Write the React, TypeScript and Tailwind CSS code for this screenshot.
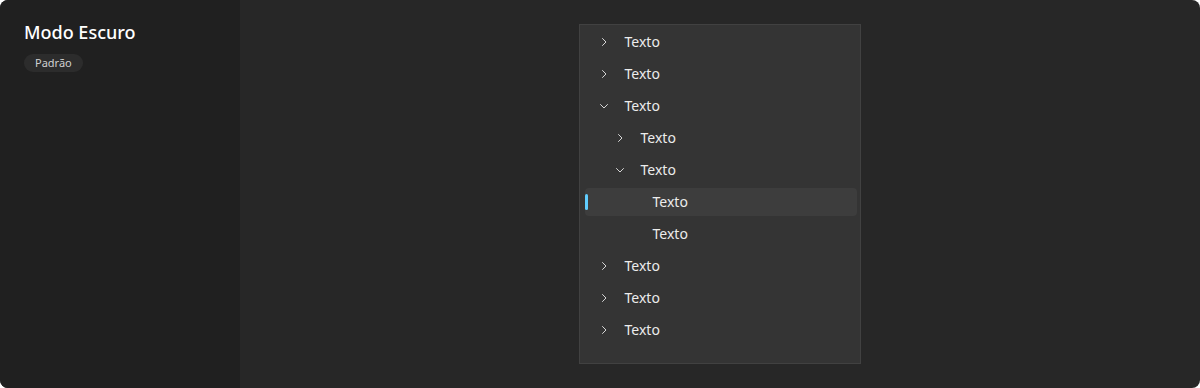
import React from "react";

type Node = {
  label: string;
  level: number;
  kind: "closed" | "open" | "leaf";
  selected?: boolean;
};

const nodes: Node[] = [
  { label: "Texto", level: 0, kind: "closed" },
  { label: "Texto", level: 0, kind: "closed" },
  { label: "Texto", level: 0, kind: "open" },
  { label: "Texto", level: 1, kind: "closed" },
  { label: "Texto", level: 1, kind: "open" },
  { label: "Texto", level: 2, kind: "leaf", selected: true },
  { label: "Texto", level: 2, kind: "leaf" },
  { label: "Texto", level: 0, kind: "closed" },
  { label: "Texto", level: 0, kind: "closed" },
  { label: "Texto", level: 0, kind: "closed" },
];

function Chevron({ open }: { open: boolean }) {
  return (
    <svg width="12" height="12" viewBox="0 0 12 12" fill="none" className="text-[#d6d6d6]">
      {open ? (
        <path d="M2.5 4.5 6 8l3.5-3.5" stroke="currentColor" strokeWidth="1" strokeLinecap="round" strokeLinejoin="round" />
      ) : (
        <path d="M4.5 2.5 8 6l-3.5 3.5" stroke="currentColor" strokeWidth="1" strokeLinecap="round" strokeLinejoin="round" />
      )}
    </svg>
  );
}

function TreeRow({ node }: { node: Node }) {
  const pad = node.kind === "leaf" ? 68 + (node.level - 2) * 16 : 13 + node.level * 16;
  return (
    <div
      className={`relative flex h-[28px] items-center rounded-[4px] ${node.selected ? "bg-[#3d3d3d]" : ""}`}
      style={{ paddingLeft: pad }}
    >
      {node.selected && (
        <span className="absolute left-0 top-[6px] h-[16px] w-[3px] rounded-full bg-[#60cdff]" />
      )}
      {node.kind !== "leaf" && (
        <span className="mr-[15px] flex w-[12px] items-center justify-center">
          <Chevron open={node.kind === "open"} />
        </span>
      )}
      <span className="text-[14px] leading-[20px] text-[#ececec]">{node.label}</span>
    </div>
  );
}

export default function App() {
  return (
    <div className="h-[388px] w-[1200px] bg-white font-['Noto_Sans',sans-serif]">
      <div className="flex h-full overflow-hidden rounded-[8px] bg-[#272727]">
        <aside className="w-[240px] shrink-0 bg-[#202020] px-6 pt-[20px]">
          <h1 className="text-[18px] font-medium leading-[25px] text-white">Modo Escuro</h1>
          <span className="mt-[9px] inline-flex h-[18px] items-center rounded-full bg-[#2c2c2c] px-[11px] text-[11px] text-[#d0d0d0]">
            Padrão
          </span>
        </aside>
        <main className="flex flex-1 justify-center pt-[24px]">
          <div className="ml-[-1px] flex h-[340px] w-[282px] flex-col gap-[4px] border border-[#414141] bg-[#343434] pb-4 pl-[5px] pr-[3px] pt-[3px]">
            {nodes.map((n, i) => (
              <TreeRow key={i} node={n} />
            ))}
          </div>
        </main>
      </div>
    </div>
  );
}
